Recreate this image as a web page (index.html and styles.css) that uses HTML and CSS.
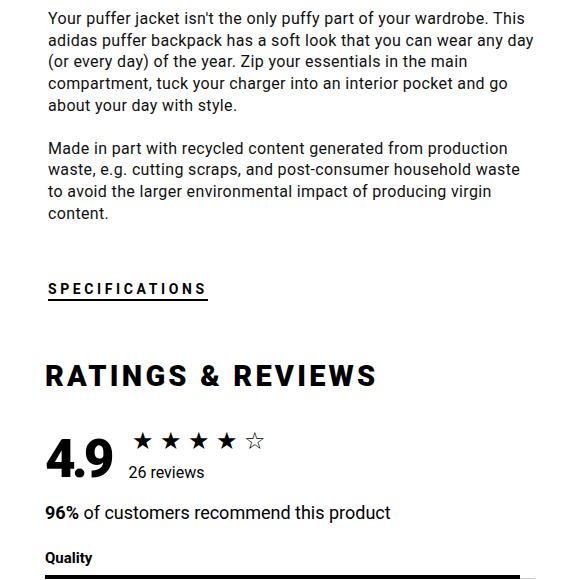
FILE: index.html
```html
<!DOCTYPE html>
<html>
<head>
<meta charset="utf-8">
<link rel="stylesheet" href="styles.css">
</head>
<body>
<div class="page">
  <section class="desc">
    <p>Your puffer jacket isn't the only puffy part of your wardrobe. This adidas puffer backpack has a soft look that you can wear any day (or every day) of the year. Zip your essentials in the main compartment, tuck your charger into an interior pocket and go about your day with style.</p>
    <p>Made in part with recycled content generated from production waste, e.g. cutting scraps, and post-consumer household waste to avoid the larger environmental impact of producing virgin content.</p>
    <a class="spec">SPECIFICATIONS</a>
  </section>
  <section class="reviews">
    <h2 class="title">RATINGS &amp; REVIEWS</h2>
    <div class="summary">
      <div class="score">4.9</div>
      <div class="meta">
        <div class="stars"><span>★</span><span>★</span><span>★</span><span>★</span><span>☆</span></div>
        <div class="count">26 reviews</div>
      </div>
    </div>
    <p class="recommend"><b>96%</b> of customers recommend this product</p>
    <div class="metric">
      <div class="label">Quality</div>
      <div class="track"><div class="fill" style="width:97%"></div></div>
    </div>
  </section>
</div>
</body>
</html>
```
FILE: styles.css
```css
html, body { margin: 0; padding: 0; background: #fff; }
body { font-family: Roboto, "Liberation Sans", sans-serif; color: #000; }
.page { width: 580px; }
.desc { padding: 8px 46px 0 48px; }
.desc p { margin: 0 0 21px 0; font-size: 16px; line-height: 21.7px; letter-spacing: 0.35px; color: #111; }
.spec { display: inline-block; margin-top: 36px; font-size: 14px; font-weight: 700; letter-spacing: 3.6px; padding-bottom: 2px; border-bottom: 2px solid #000; }
.reviews { padding: 0 45px; }
.title { margin: 58px 0 0 0; font-size: 29px; font-weight: 900; letter-spacing: 3.2px; line-height: 34px; }
.summary { display: flex; align-items: flex-start; margin-top: 38px; }
.score { font-size: 53px; font-weight: 900; line-height: 56px; letter-spacing: -4px; }
.meta { margin-left: 22px; margin-top: -4px; }
.stars { display: flex; gap: 6px; font-size: 24px; line-height: 28px; }
.count { font-size: 16px; margin-top: 8px; margin-left: -4px; }
.recommend { margin: 15px 0 0 0; font-size: 18px; }
.metric { margin-top: 26px; }
.label { font-size: 15px; font-weight: 700; }
.track { margin-top: 11px; height: 1px; background: #ccc; position: relative; width: 490px; }
.fill { height: 6px; background: #000; position: absolute; top: -3px; left: 0; }
```
